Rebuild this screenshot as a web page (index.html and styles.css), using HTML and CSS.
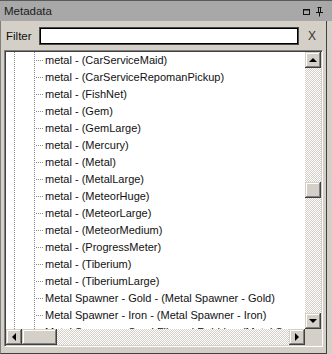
FILE: index.html
```html
<!DOCTYPE html>
<html>
  <head>
    <title>Metadata</title>
    <link rel="stylesheet" href="styles.css">
  </head>
  <body>
    <div class="panel">
      <!-- title bar with float / pin buttons -->
      <div class="titlebar">
        <span class="title">Metadata</span>
        <span class="title-icons">
          <svg width="9" height="9" viewBox="0 0 9 9"><rect x="1.5" y="2.5" width="6" height="5" fill="none" stroke="#111" stroke-width="1"/><line x1="1" y1="3" x2="8" y2="3" stroke="#111"/></svg>
          <svg width="9" height="11" viewBox="0 0 9 11"><path d="M2.5 1.5h4M3.5 1.5v5M5.5 1.5v5M1 6.5h7M4.5 6.5v4" fill="none" stroke="#111" stroke-width="1"/></svg>
        </span>
      </div>

      <div class="content">
        <!-- filter row -->
        <div class="filter-row">
          <label class="filter-label" for="filter">Filter</label>
          <input class="filter-input" id="filter" type="text">
          <span class="filter-clear">X</span>
        </div>

        <!-- tree view -->
        <div class="tree">
          <div class="tree-rows">
            <div class="guide guide-root"></div>
            <div class="guide guide-child"></div>
            <div class="row">metal - (CarServiceMaid)</div>
            <div class="row">metal - (CarServiceRepomanPickup)</div>
            <div class="row">metal - (FishNet)</div>
            <div class="row">metal - (Gem)</div>
            <div class="row">metal - (GemLarge)</div>
            <div class="row">metal - (Mercury)</div>
            <div class="row">metal - (Metal)</div>
            <div class="row">metal - (MetalLarge)</div>
            <div class="row">metal - (MeteorHuge)</div>
            <div class="row">metal - (MeteorLarge)</div>
            <div class="row">metal - (MeteorMedium)</div>
            <div class="row">metal - (ProgressMeter)</div>
            <div class="row">metal - (Tiberium)</div>
            <div class="row">metal - (TiberiumLarge)</div>
            <div class="row">Metal Spawner - Gold - (Metal Spawner - Gold)</div>
            <div class="row">Metal Spawner - Iron - (Metal Spawner - Iron)</div>
            <div class="row">Metal Spawner - Sand Fibered Rubble - (Metal Spawner - Sand Fibered Rubble)</div>
          </div>

          <!-- vertical scrollbar -->
          <div class="vscroll">
            <div class="sbtn"><span class="arrow arrow-up"></span></div>
            <div class="track vtrack">
              <div class="sbtn vthumb"></div>
            </div>
            <div class="sbtn"><span class="arrow arrow-down"></span></div>
          </div>

          <!-- horizontal scrollbar -->
          <div class="hscroll">
            <div class="sbtn"><span class="arrow arrow-left"></span></div>
            <div class="track htrack">
              <div class="sbtn hthumb"></div>
            </div>
            <div class="sbtn"><span class="arrow arrow-right"></span></div>
          </div>

          <div class="corner"></div>
        </div>
      </div>
    </div>
  </body>
</html>
```

FILE: styles.css
```css
/* Page reset */
body {
  margin: 0;
  font-family: "Liberation Sans", Arial, sans-serif;
  font-size: 11px;
  color: #111;
  background: #d4d0c8;
}

/* Outer tool window */
.panel {
  width: 332px;
  height: 354px;
  display: flex;
  flex-direction: column;
  overflow: hidden;
}

/* Title bar */
.titlebar {
  height: 20px;
  border-top: 1px solid #5a5a5a;
  background: #a8a8a8;
  display: flex;
  align-items: center;
  justify-content: space-between;
  padding: 0 8px 0 4px;
  font-size: 11.5px;
  color: #1c1c1c;
}

.title-icons {
  display: flex;
  align-items: center;
  gap: 4px;
}

/* Area under the title */
.content {
  flex: 1;
  width: 322px;
  border-right: 1px solid #404040;
  border-bottom: 1px solid #404040;
  border-left: 1px solid #808080;
  padding: 0 3px 4px 0;
}

/* Filter row */
.filter-row {
  height: 29px;
  display: flex;
  align-items: center;
}

.filter-label {
  width: 33px;
  padding-left: 5px;
  font-size: 11.5px;
}

.filter-input {
  width: 258px;
  height: 16px;
  margin: 0;
  padding: 0;
  border: 1px solid #4a4a4a;
  box-shadow: inset 0 0 0 1px #000;
  background: #fff;
}

.filter-clear {
  margin-left: 9px;
  font-size: 12px;
  color: #333;
}

/* Tree view with its scrollbars */
.tree {
  margin-left: 3px;
  width: 315px;
  height: 293px;
  border: 1px solid;
  border-color: #808080 #fff #fff #808080;
  box-shadow: inset 1px 1px #404040, inset -1px -1px #d4d0c8;
  padding: 1px;
  display: grid;
  grid-template-columns: 299px 16px;
  grid-template-rows: 277px 16px;
  background: #fff;
}

.tree-rows {
  position: relative;
  overflow: hidden;
  background: #fff;
}

/* Dotted tree guide lines */
.guide {
  position: absolute;
  top: 0;
  bottom: 0;
  width: 1px;
  background: repeating-linear-gradient(to bottom, #8a8a8a 0 1px, transparent 1px 2px);
}

.guide-root {
  left: 8px;
}

.guide-child {
  left: 28px;
}

.row {
  position: relative;
  height: 17px;
  line-height: 17px;
  padding-left: 39px;
  white-space: nowrap;
  font-size: 11px;
}

.row::before {
  content: "";
  position: absolute;
  left: 29px;
  top: 8px;
  width: 9px;
  height: 1px;
  background: repeating-linear-gradient(to right, transparent 0 1px, #8a8a8a 1px 2px);
}

/* Scrollbars */
.vscroll {
  display: flex;
  flex-direction: column;
}

.hscroll {
  display: flex;
}

.sbtn {
  width: 16px;
  height: 16px;
  flex: none;
  background: #d4d0c8;
  box-shadow: inset -1px -1px #404040, inset 1px 1px #d4d0c8, inset -2px -2px #808080, inset 2px 2px #fff;
  display: flex;
  align-items: center;
  justify-content: center;
}

.track {
  flex: 1;
  background-image: conic-gradient(#fff 25%, #d4d0c8 0 50%, #fff 0 75%, #d4d0c8 0);
  background-size: 2px 2px;
}

.vtrack {
  padding-top: 114px;
}

.htrack {
  display: flex;
}

.hthumb {
  width: 35px;
}

.corner {
  background: #d4d0c8;
}

/* Arrow glyphs */
.arrow {
  width: 0;
  height: 0;
  border: 4px solid transparent;
}

.arrow-up {
  border-bottom-color: #000;
  border-top-width: 0;
  margin-top: -1px;
}

.arrow-down {
  border-top-color: #000;
  border-bottom-width: 0;
}

.arrow-left {
  border-right-color: #000;
  border-left-width: 0;
}

.arrow-right {
  border-left-color: #000;
  border-right-width: 0;
}
```
